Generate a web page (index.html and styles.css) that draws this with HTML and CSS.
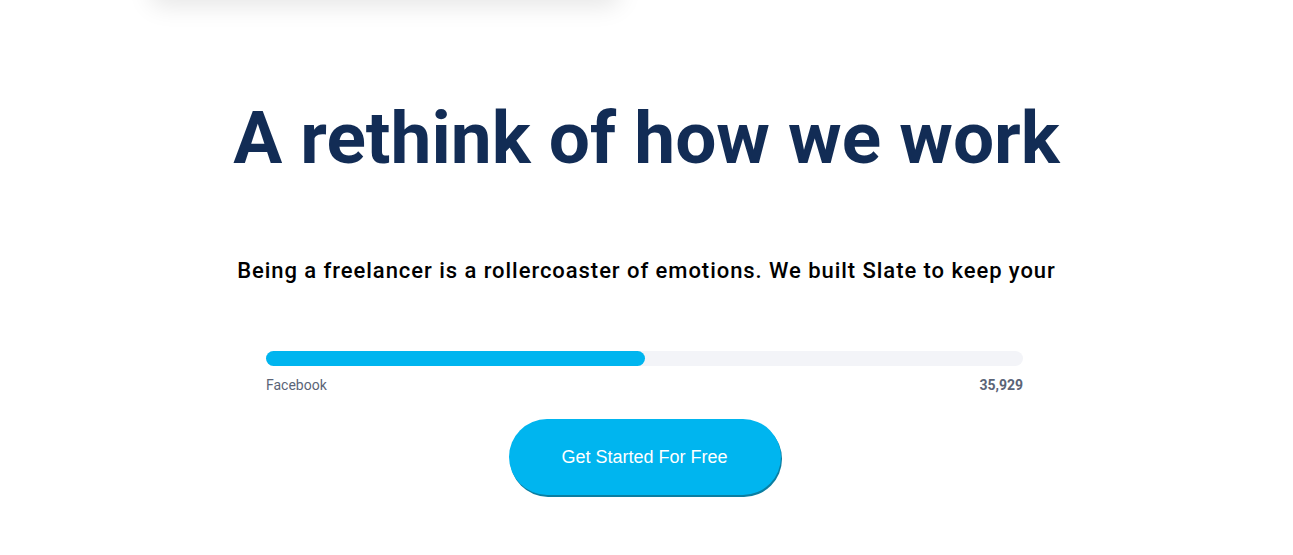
FILE: index.html
```html
<!DOCTYPE html>
<html>
<head>
<meta charset="utf-8">
<link rel="stylesheet" href="styles.css">
</head>
<body>
<div class="card-edge"></div>
<section class="hero">
  <h1 class="title">A rethink of how we work</h1>
  <p class="lead">Being a freelancer is a rollercoaster of emotions. We built Slate to keep your</p>
  <div class="stat">
    <div class="track"><div class="fill" style="width:50%"></div></div>
    <div class="stat-labels"><span class="stat-name">Facebook</span><span class="stat-value">35,929</span></div>
  </div>
  <a class="cta" href="#">Get Started For Free</a>
</section>
</body>
</html>
```
FILE: styles.css
```css
html, body { margin: 0; padding: 0; background: #fff; }
body { overflow: hidden; height: 555px; }
.card-edge {
  width: 470px;
  height: 30px;
  margin: -30px 0 0 150px;
  background: #fff;
  border-radius: 12px;
  box-shadow: 0 6px 24px rgba(0,0,0,0.10);
}
.hero {
  display: flex;
  flex-direction: column;
  align-items: center;
}
.title {
  margin: 96px 0 0;
  font-family: Roboto, sans-serif;
  font-weight: 700;
  font-size: 73px;
  line-height: 84px;
  color: #122c55;
}
.lead {
  margin: 76px 0 0;
  font-family: Roboto, sans-serif;
  font-weight: 500;
  font-size: 22px;
  line-height: 30px;
  letter-spacing: 0.95px;
  color: #000;
}
.stat {
  width: 757px;
  margin-top: 65px;
  margin-right: 4px;
}
.track {
  height: 15px;
  border-radius: 8px;
  background: #f3f4f8;
}
.fill {
  height: 100%;
  border-radius: 8px;
  background: #00b5ef;
}
.stat-labels {
  display: flex;
  justify-content: space-between;
  margin-top: 10px;
  font-family: Roboto, sans-serif;
  font-size: 14px;
  line-height: 18px;
  color: #5b6477;
}
.stat-value { font-weight: 700; }
.cta {
  margin-top: 25px;
  margin-right: 4px;
  width: 272px;
  height: 76px;
  border-radius: 38px;
  background: #00b5ef;
  box-shadow: 1px 2px 0 #0b7ea1;
  display: flex;
  align-items: center;
  justify-content: center;
  font-family: "Liberation Sans", Arial, sans-serif;
  font-size: 18px;
  color: #fff;
  text-decoration: none;
}
```
